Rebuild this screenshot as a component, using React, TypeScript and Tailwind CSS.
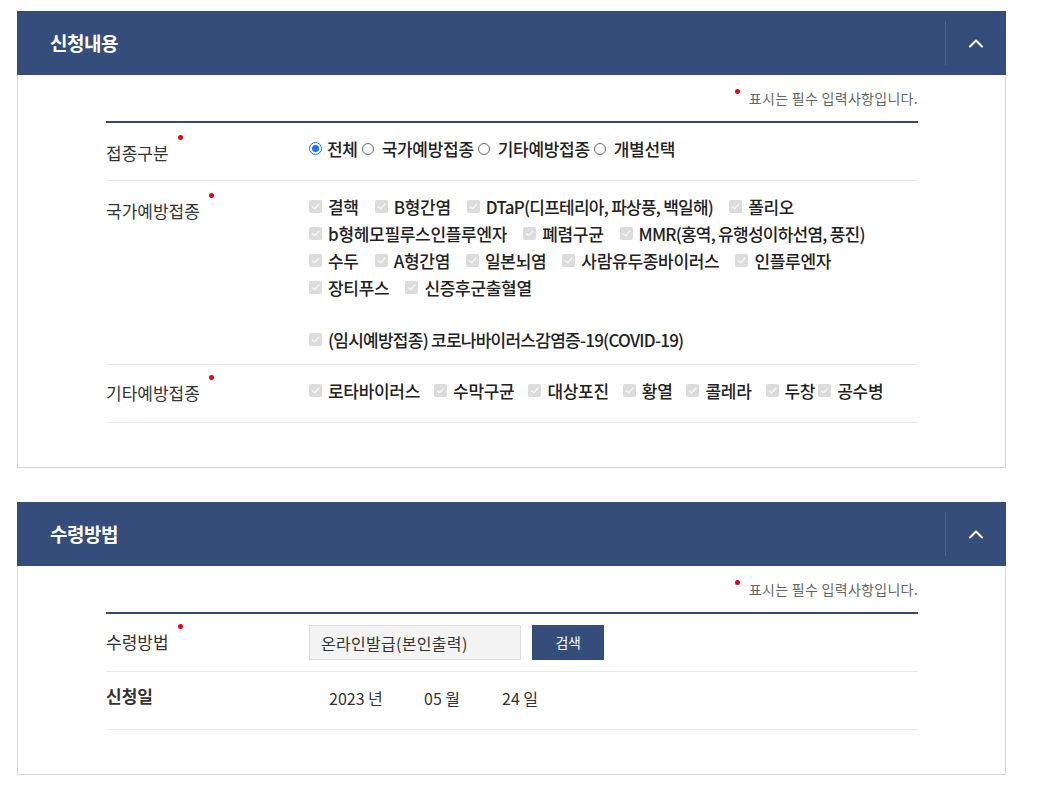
import type { ReactNode } from "react";

const FONT = { fontFamily: '"Noto Sans CJK KR", "Noto Sans", sans-serif' };

function RequiredDot() {
  return <span className="relative -top-[7px] ml-[9px] inline-block h-[5px] w-[5px] rounded-full bg-[#e60012] align-top" />;
}

function Check() {
  return (
    <span className="mr-[6px] inline-flex h-[13px] w-[13px] shrink-0 items-center justify-center rounded-[2px] bg-[#dcdcdc]">
      <svg width="9" height="9" viewBox="0 0 10 10" fill="none">
        <path d="M1.5 5.2 4 7.6 8.6 2.4" stroke="#f4f4f4" strokeWidth="1.6" strokeLinecap="round" strokeLinejoin="round" />
      </svg>
    </span>
  );
}

// items holding latin text are set a little tighter, as in the original page
function Item({ label, gap = "mr-[16px]" }: { label: string; gap?: string }) {
  const latin = /[A-Z]{2}/.test(label);
  return (
    <span className={`inline-flex items-center ${gap}`}>
      <Check />
      <span className={latin ? "tracking-[-0.75px]" : ""}>{label}</span>
    </span>
  );
}

function Radio({ label, checked }: { label: string; checked?: boolean }) {
  return (
    <span className="mr-[4px] inline-flex items-center">
      {checked ? (
        <span className="mr-[5px] inline-flex h-[13px] w-[13px] items-center justify-center rounded-full border-[1.5px] border-[#1a73e8]">
          <span className="h-[7px] w-[7px] rounded-full bg-[#1a73e8]" />
        </span>
      ) : (
        <span className="mr-[8px] inline-block h-[12px] w-[12px] rounded-full border border-[#666]" />
      )}
      {label}
    </span>
  );
}

function Panel({ title, children }: { title: string; children: ReactNode }) {
  return (
    <section className="w-[989px]">
      <header className="flex h-[64px] items-center bg-[#344d7b]">
        <h2 className="flex-1 pl-[33px] text-[19px] font-bold tracking-[-0.5px] text-white">{title}</h2>
        <div className="h-[44px] w-px bg-[#4b6392]" />
        <button className="flex h-full w-[60px] items-center justify-center">
          <svg width="16" height="10" viewBox="0 0 16 10" fill="none">
            <path d="M2 8.5 8 2.5l6 6" stroke="#fff" strokeWidth="2" strokeLinecap="round" strokeLinejoin="round" />
          </svg>
        </button>
      </header>
      <div className="border border-t-0 border-[#d9d9d9] pb-[44px] pl-[88px] pr-[87px] pt-[13px]">
        <p className="mb-[13px] flex justify-end text-[14px] leading-[20px] tracking-[0.3px] text-[#666]">
          <span className="mr-[9px] mt-[1px] inline-block h-[5px] w-[5px] rounded-full bg-[#e60012]" />
          표시는 필수 입력사항입니다.
        </p>
        <div className="border-t-2 border-[#3b4a66]">{children}</div>
      </div>
    </section>
  );
}

function Row({
  label,
  children,
  minH,
  bold,
  required,
  labelPt = "pt-[19px]",
}: {
  label: string;
  children: ReactNode;
  minH: string;
  bold?: boolean;
  required?: boolean;
  labelPt?: string;
}) {
  return (
    <div className={`flex border-b border-[#ebebeb] ${minH}`}>
      <div className={`w-[203px] shrink-0 ${labelPt} text-[17px] leading-[22px] text-[#333] ${bold ? "font-semibold" : ""}`}>
        {label}
        {required ? <RequiredDot /> : null}
      </div>
      <div className="flex-1 text-[17px] font-medium tracking-[-0.3px] text-[#222]">{children}</div>
    </div>
  );
}

const nationalLines: string[][] = [
  ["결핵", "B형간염", "DTaP(디프테리아, 파상풍, 백일해)", "폴리오"],
  ["b형헤모필루스인플루엔자", "폐렴구균", "MMR(홍역, 유행성이하선염, 풍진)"],
  ["수두", "A형간염", "일본뇌염", "사람유두종바이러스", "인플루엔자"],
  ["장티푸스", "신증후군출혈열"],
];

const otherItems = ["로타바이러스", "수막구균", "대상포진", "황열", "콜레라"];

export default function App() {
  return (
    <div className="min-h-[785px] bg-white pl-[17px] pt-[11px]" style={FONT}>
      <div className="flex flex-col gap-[34px]">
        <Panel title="신청내용">
          <Row label="접종구분" required minH="min-h-[58px]">
            <div className="flex pt-[12px] leading-[27px]">
              <Radio label="전체" checked />
              <Radio label="국가예방접종" />
              <Radio label="기타예방접종" />
              <Radio label="개별선택" />
            </div>
          </Row>
          <Row label="국가예방접종" required minH="min-h-[184px]">
            <div className="pt-[12px] leading-[27px]">
              {nationalLines.map((line, i) => (
                <div key={i} className="flex">
                  {line.map((item) => (
                    <Item key={item} label={item} />
                  ))}
                </div>
              ))}
              <div className="h-[25px]" />
              <div className="flex">
                <Item label="(임시예방접종) 코로나바이러스감염증-19(COVID-19)" />
              </div>
            </div>
          </Row>
          <Row label="기타예방접종" required minH="min-h-[58px]" labelPt="pt-[17px]">
            <div className="flex pt-[12px] leading-[27px]">
              {otherItems.map((item) => (
                <Item key={item} label={item} gap="mr-[14px]" />
              ))}
              <Item label="두창" gap="mr-[3px]" />
              <Item label="공수병" />
            </div>
          </Row>
        </Panel>

        <Panel title="수령방법">
          <Row label="수령방법" required minH="min-h-[58px]" labelPt="pt-[17px]">
            <div className="flex items-center gap-[11px] pt-[11px]">
              <div className="flex h-[35px] w-[212px] items-center border border-[#dddddd] bg-[#f3f3f3] px-[11px] text-[16px] font-normal tracking-[0.3px] text-[#333]">
                온라인발급(본인출력)
              </div>
              <button className="h-[35px] w-[72px] bg-[#344d7b] text-[14px] font-normal text-white">검색</button>
            </div>
          </Row>
          <Row label="신청일" bold minH="min-h-[58px]" labelPt="pt-[13px]">
            <div className="flex pl-[20px] pt-[15px] text-[16px] font-normal leading-[22px] tracking-normal text-[#333]">
              <span className="w-[95px]">2023 년</span>
              <span className="w-[78px]">05 월</span>
              <span>24 일</span>
            </div>
          </Row>
        </Panel>
      </div>
    </div>
  );
}
